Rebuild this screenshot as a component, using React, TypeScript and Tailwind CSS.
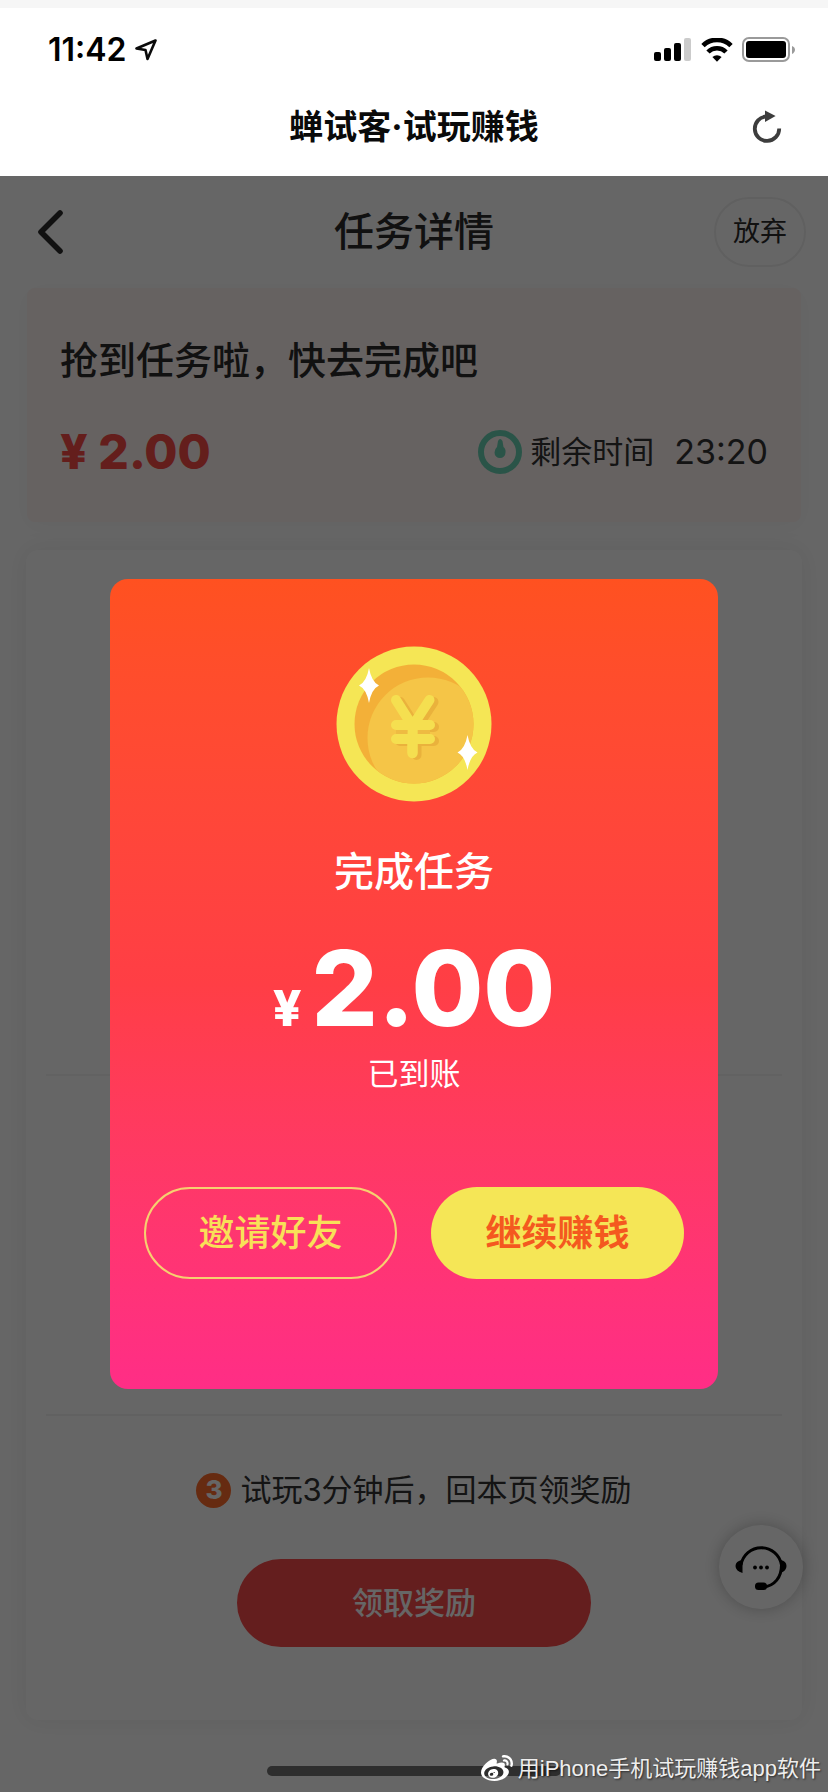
import React from "react";
import { FaWeibo } from "react-icons/fa";

function StatusBar() {
  return (
    <div className="flex h-[84px] items-center justify-between pr-8 pl-12">
      <div className="flex items-center gap-2">
        <span className="text-[32px] leading-10 font-semibold text-black">11:42</span>
        <svg className="size-[22px]" viewBox="0 0 22 22" fill="none" stroke="#0a0a0a" strokeWidth="2.6" strokeLinejoin="round">
          <path d="M20.500 1.500 L1.500 9.500 L10.500 11 L12.500 20 Z" />
        </svg>
      </div>
      <div className="flex items-center gap-[9px]">
        <svg className="h-6 w-[38px]" viewBox="0 0 38 24">
          <rect x="0" y="14" width="7" height="9" rx="2" fill="#000" />
          <rect x="10" y="10" width="7" height="13" rx="2" fill="#000" />
          <rect x="20" y="5" width="7" height="18" rx="2" fill="#000" />
          <rect x="30" y="0" width="7" height="23" rx="2" fill="#cbcbcb" />
        </svg>
        <svg className="h-6 w-8" viewBox="0 0 32 24" fill="none" stroke="#000">
          <path d="M2 7.600 A20 20 0 0 1 30 7.600" strokeWidth="4.8" />
          <path d="M7 14 A12.600 12.600 0 0 1 25 14" strokeWidth="4.6" />
          <path d="M11.400 19 A7 7 0 0 1 20.600 19 L16 23.800 Z" fill="#000" stroke="none" />
        </svg>
        <svg className="h-[26px] w-[54px]" viewBox="0 0 54 26">
          <rect x="1" y="1" width="46" height="23" rx="6" fill="#fff" stroke="#9a9a9a" strokeWidth="2" />
          <rect x="4" y="4" width="40" height="17" rx="3" fill="#000" />
          <path d="M50 9 C54 10.500 54 15 50 17 Z" fill="#9a9a9a" />
        </svg>
      </div>
    </div>
  );
}

function TitleBar() {
  return (
    <div className="grid h-[84px] grid-cols-[1fr_auto_1fr] items-start px-[46px] pt-[10px]">
      <h1 className="col-start-2 text-[34px] leading-[50px] font-bold text-[#0a0a0a]">蝉试客·试玩赚钱</h1>
      <button type="button" aria-label="刷新" className="mt-2 justify-self-end">
        <svg className="h-[34px] w-[30px]" viewBox="0 0 30 34">
          <path d="M14.500 6.500 A12.200 12.200 0 1 0 27.200 18.500" fill="none" stroke="#3d3d3d" strokeWidth="3.8" />
          <path d="M13 0.500 L23.600 6 L13 12 Z" fill="#3d3d3d" />
        </svg>
      </button>
    </div>
  );
}

function Coin() {
  return (
    <svg className="size-[156px]" viewBox="0 0 156 156">
      <defs>
        <clipPath id="coin-face">
          <circle cx="78" cy="78" r="59.5" />
        </clipPath>
      </defs>
      <circle cx="78" cy="78" r="77.5" fill="#f5e655" />
      <circle cx="78" cy="78" r="59.5" fill="#f3b038" />
      <circle cx="92" cy="92" r="60.5" fill="#f5c547" clipPath="url(#coin-face)" />
      <g fill="none" strokeLinecap="round" strokeLinejoin="round" strokeWidth="10" stroke="#eab23c" transform="translate(4 2)">
        <path d="M60 54 L76.500 80 L93.500 54 M76.500 80 V107 M60 79 H94 M60 93 H94" />
      </g>
      <g fill="none" strokeLinecap="round" strokeLinejoin="round" stroke="#f5df50">
        <path d="M60 54 L76.500 80 L93.500 54" strokeWidth="10" />
        <path d="M76.500 80 V107" strokeWidth="10.5" />
        <path d="M60 79 H94 M60 93 H94" strokeWidth="10" />
      </g>
      <path d="M60 86 H94" stroke="#eebb42" strokeWidth="4" strokeDasharray="11.500 10.500 12" />
      <path d="M33 22 Q35.500 36 43 39.500 Q35.500 43 33 57 Q30.500 43 23 39.500 Q30.500 36 33 22 Z" fill="#fff" />
      <path d="M131.500 89 Q134 103 141.500 106.500 Q134 110 131.500 124 Q129 110 121.500 106.500 Q129 103 131.500 89 Z" fill="#fff" />
    </svg>
  );
}

function RewardDialog() {
  return (
    <section
      role="dialog"
      aria-label="完成任务"
      className="flex w-[608px] max-w-full flex-col items-center rounded-[18px] bg-linear-to-b from-[#ff5120] via-[#ff3e45] to-[#ff2d86] px-[34px] pt-[67px] pb-[110px] text-white"
    >
      <Coin />
      <h3 className="mt-[40px] text-[40px] leading-[60px] font-medium">完成任务</h3>
      <p className="mt-[26px] flex items-baseline gap-[10px] font-extrabold">
        <span className="text-[50px] leading-none">¥</span>
        <span className="text-[104px] leading-[120px]">2.00</span>
      </p>
      <p className="mt-[3px] text-[31px] leading-[46px]">已到账</p>
      <div className="mt-[90px] grid w-full grid-cols-2 gap-[34px]">
        <button type="button" className="h-[92px] rounded-full border-2 border-[#f6d070] text-[36px] font-medium text-[#f8e058]">
          邀请好友
        </button>
        <button type="button" className="h-[92px] rounded-full bg-[#f5e656] text-[36px] font-bold text-[#f4591f]">
          继续赚钱
        </button>
      </div>
    </section>
  );
}

function TaskSummary() {
  return (
    <section className="mx-[27px] h-[234px] rounded-lg bg-[#fff4f2] px-[33px] pt-[44px] shadow-[0_4px_24px_rgba(0,0,0,0.03)]">
      <h3 className="text-[38px] leading-[56px] font-medium text-[#2c2c2c]">抢到任务啦，快去完成吧</h3>
      <div className="mt-[34px] flex items-center justify-between">
        <p className="text-[48px] leading-[60px] font-extrabold text-[#fa4b46]">¥ 2.00</p>
        <div className="flex items-center gap-2">
          <svg className="size-[44px]" viewBox="0 0 44 44" fill="#6ad2b4">
            <circle cx="22" cy="22" r="19" fill="none" stroke="#6ad2b4" strokeWidth="6" />
            <path d="M20 11 Q22 7 24.500 11 L25.500 17 Q28 19 27.500 22.500 A5.500 5.500 0 0 1 16.500 22.500 Q16.500 19 19 17 Z" />
          </svg>
          <span className="text-[31px] leading-[46px] text-[#333]">剩余时间</span>
          <time className="ml-3 text-[34px] leading-[46px] text-[#333]">23:20</time>
        </div>
      </div>
    </section>
  );
}

function TaskSteps() {
  return (
    <section className="mx-[26px] mt-[28px] rounded-xl bg-white px-5 pb-[73px] shadow-[0_0_24px_rgba(0,0,0,0.07)]">
      <div className="h-[526px] border-b-2 border-[#f4f4f4]" />
      <div className="h-[340px] border-b-2 border-[#f2f2f2]" />
      <div className="flex flex-col items-center pt-[51px]">
        <div className="flex items-center gap-[9px]">
          <span className="flex size-[35px] items-center justify-center rounded-full bg-[#ff6c2c] text-[26px] leading-none font-extrabold text-white">3</span>
          <p className="text-[31px] leading-[46px] text-[#333]">试玩3分钟后，回本页领奖励</p>
        </div>
        <button type="button" className="mt-[46px] h-[88px] w-[354px] rounded-full bg-[#fa4b4b] text-[31px] font-medium text-white">
          领取奖励
        </button>
      </div>
    </section>
  );
}

function SupportButton() {
  return (
    <button
      type="button"
      aria-label="客服"
      className="absolute right-[25px] bottom-[183px] flex size-[84px] items-center justify-center rounded-full bg-white shadow-[0_0_16px_rgba(0,0,0,0.25)]"
    >
      <svg className="h-[46px] w-[52px]" viewBox="0 0 52 46" fill="none" stroke="#000" strokeWidth="3">
        <path d="M6 21 A20.500 20.500 0 0 1 46.500 21 C46.500 33 40 42 28 43" />
        <path d="M7.500 16 V29 Q0.500 27 0.500 22 Q0.500 17 7.500 16 Z M45.500 16 V29 Q51.500 27 51.500 22 Q51.500 17 45.500 16 Z" fill="#000" stroke="none" />
        <rect x="20" y="38.500" width="12" height="7.500" rx="3.500" fill="#000" stroke="none" />
        <g fill="#000" stroke="none">
          <circle cx="20" cy="23.500" r="1.900" />
          <circle cx="26" cy="23.500" r="1.900" />
          <circle cx="32" cy="23.500" r="1.900" />
        </g>
      </svg>
    </button>
  );
}

export default function App() {
  return (
    <div className="flex min-h-screen flex-col bg-white font-[Inter,'Noto_Sans_CJK_SC',sans-serif]">
      <header className="border-t-8 border-[#f6f6f6] bg-white">
        <StatusBar />
        <TitleBar />
      </header>
      <main className="relative flex-1 bg-white pb-[72px]">
        <nav className="grid h-[112px] grid-cols-[1fr_auto_1fr] items-center px-[22px]">
          <a href="#back" aria-label="返回" className="pl-[14px]">
            <svg className="h-[46px] w-[28px]" viewBox="0 0 28 46" fill="none" stroke="#2b2b2b" strokeWidth="5.6" strokeLinecap="round" strokeLinejoin="round">
              <path d="M24 4 L5 23 L24 42" />
            </svg>
          </a>
          <h2 className="text-[40px] leading-[60px] font-medium text-[#2c2c2c]">任务详情</h2>
          <button type="button" className="h-[70px] w-[92px] justify-self-end rounded-full border-2 border-[#f0f0f0] text-[27px] text-[#2c2c2c]">
            放弃
          </button>
        </nav>
        <TaskSummary />
        <TaskSteps />
        <SupportButton />
        <div className="absolute inset-0 flex items-center justify-center bg-black/60">
          <RewardDialog />
        </div>
        <div className="absolute bottom-4 left-1/2 h-[10px] w-[294px] -translate-x-1/2 rounded-full bg-[#2e2e2e]" />
        <div className="absolute right-[7px] bottom-[5px] flex items-center gap-[5px] text-[22px] leading-9 text-[#eee] [text-shadow:1px_1px_2px_rgba(0,0,0,0.6)]">
          <FaWeibo className="size-8 text-white" />
          <span className="font-['Liberation_Sans','Noto_Sans_CJK_SC',sans-serif]">用iPhone手机试玩赚钱app软件</span>
        </div>
      </main>
    </div>
  );
}
